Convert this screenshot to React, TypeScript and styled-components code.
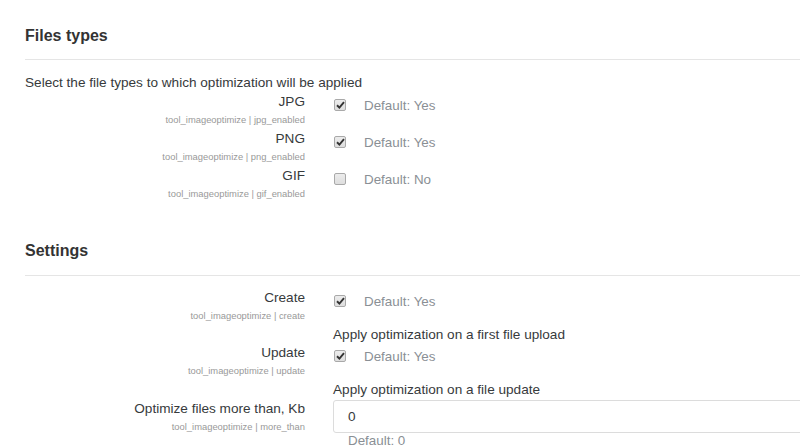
import React from "react";
import styled, { createGlobalStyle } from "styled-components";

const Global = createGlobalStyle`
  html, body { margin: 0; padding: 0; background: #fff; overflow: hidden; }
  body { font-family: "Liberation Sans", Arial, sans-serif; color: #373a3c; }
`;

const Page = styled.div`
  width: 800px;
  height: 445px;
  overflow: hidden;
  padding-left: 25px;
  box-sizing: border-box;
`;

const Section = styled.section<{ $top: number }>`
  padding-top: ${(p) => p.$top}px;
`;

const Heading = styled.h3<{ $pb: number }>`
  margin: 0;
  font-size: 16px;
  font-weight: bold;
  line-height: 20px;
  color: #333;
  padding-bottom: ${(p) => p.$pb}px;
  border-bottom: 1px solid #e5e5e5;
`;

const Intro = styled.p`
  margin: 13px 0 0;
  font-size: 13.6px;
  line-height: 20px;
`;

const Rows = styled.div<{ $top: number }>`
  padding-top: ${(p) => p.$top}px;
`;

const Row = styled.div<{ $h: number }>`
  display: grid;
  grid-template-columns: 280px 500px;
  column-gap: 28px;
  height: ${(p) => p.$h}px;
`;

const LabelCol = styled.div`
  text-align: right;
`;

const Label = styled.div`
  font-size: 13.6px;
  line-height: 18px;
  color: #373a3c;
`;

const Sub = styled.div`
  font-size: 9.4px;
  line-height: 14px;
  margin-top: 2px;
  color: #999;
`;

const Inline = styled.div`
  display: flex;
  align-items: center;
  padding-top: 4px;
  height: 18px;
`;

const Box = styled.span<{ $on: boolean }>`
  width: 12px;
  height: 12px;
  box-sizing: border-box;
  border: 1px solid #a9a9a9;
  border-radius: 2px;
  background: linear-gradient(#ececec, #dedede);
  display: inline-flex;
  align-items: center;
  justify-content: center;
  margin-left: 1px;
  margin-right: 18px;
  margin-top: -2px;
`;

const DefaultText = styled.span`
  font-size: 13.4px;
  line-height: 18px;
  color: #8a8f95;
`;

const Desc = styled.div<{ $top: number }>`
  margin-top: ${(p) => p.$top}px;
  font-size: 13.6px;
  line-height: 18px;
  color: #373a3c;
`;

const TextInput = styled.div`
  height: 33px;
  width: 520px;
  box-sizing: border-box;
  border: 1px solid #dcdcdc;
  border-radius: 3px;
  padding-left: 14px;
  display: flex;
  align-items: center;
  font-size: 13.6px;
  color: #373a3c;
`;

const DefaultBelow = styled.div`
  font-size: 13.4px;
  line-height: 16px;
  padding-left: 15px;
  color: #8a8f95;
`;

const Check = ({ on }: { on: boolean }) => (
  <Box $on={on}>
    {on && (
      <svg width="9" height="8" viewBox="0 0 9 8">
        <path d="M1 4.3 L3.4 6.6 L8 1.2" fill="none" stroke="#333" strokeWidth="1.9" />
      </svg>
    )}
  </Box>
);

const types = [
  { label: "JPG", key: "jpg_enabled", on: true },
  { label: "PNG", key: "png_enabled", on: true },
  { label: "GIF", key: "gif_enabled", on: false },
];

export default function App() {
  return (
    <Page>
      <Global />
      <Section $top={26}>
        <Heading $pb={13}>Files types</Heading>
        <Intro>Select the file types to which optimization will be applied</Intro>
        {types.map((t) => (
          <Row key={t.key} $h={37}>
            <LabelCol>
              <Label>{t.label}</Label>
              <Sub>tool_imageoptimize | {t.key}</Sub>
            </LabelCol>
            <div>
              <Inline>
                <Check on={t.on} />
                <DefaultText>Default: {t.on ? "Yes" : "No"}</DefaultText>
              </Inline>
            </div>
          </Row>
        ))}
      </Section>
      <Section $top={37}>
        <Heading $pb={14}>Settings</Heading>
        <Rows $top={13}>
          <Row $h={55}>
            <LabelCol>
              <Label>Create</Label>
              <Sub>tool_imageoptimize | create</Sub>
            </LabelCol>
            <div>
              <Inline>
                <Check on />
                <DefaultText>Default: Yes</DefaultText>
              </Inline>
              <Desc $top={15}>Apply optimization on a first file upload</Desc>
            </div>
          </Row>
          <Row $h={56}>
            <LabelCol>
              <Label>Update</Label>
              <Sub>tool_imageoptimize | update</Sub>
            </LabelCol>
            <div>
              <Inline>
                <Check on />
                <DefaultText>Default: Yes</DefaultText>
              </Inline>
              <Desc $top={15}>Apply optimization on a file update</Desc>
            </div>
          </Row>
          <Row $h={60}>
            <LabelCol>
              <Label>Optimize files more than, Kb</Label>
              <Sub>tool_imageoptimize | more_than</Sub>
            </LabelCol>
            <div>
              <TextInput>0</TextInput>
              <DefaultBelow>Default: 0</DefaultBelow>
            </div>
          </Row>
        </Rows>
      </Section>
    </Page>
  );
}
